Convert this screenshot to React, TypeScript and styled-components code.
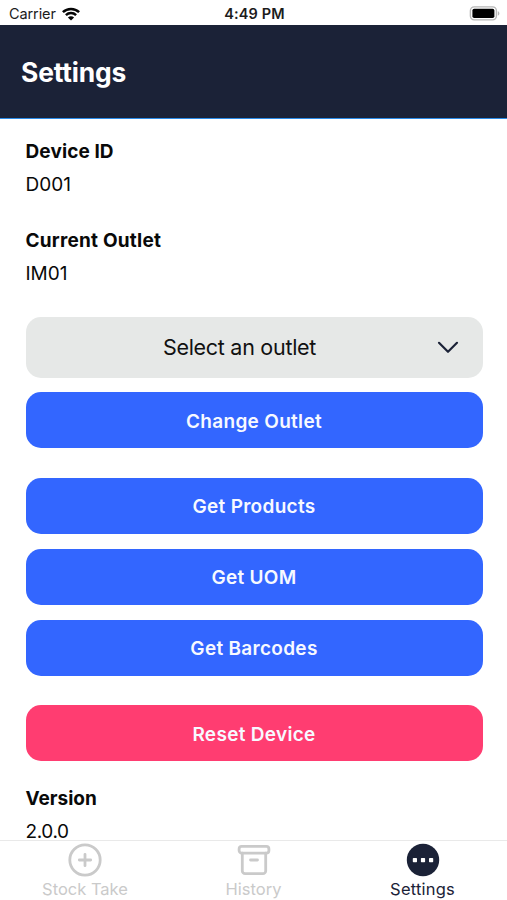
import React from 'react';
import styled, { createGlobalStyle } from 'styled-components';

const GlobalStyle = createGlobalStyle`
  * { box-sizing: border-box; }
  body { margin: 0; background: #fff; }
  button { font: inherit; border: 0; }
`;

const Screen = styled.div`
  width: 507px;
  height: 900px;
  display: flex;
  flex-direction: column;
  overflow: hidden;
  background: #fff;
  color: #090909;
  font-family: Inter, 'Liberation Sans', sans-serif;
`;

const StatusBar = styled.div`
  flex: none;
  height: 25px;
  padding: 2px 7px 0 9px;
  display: grid;
  grid-template-columns: 1fr auto 1fr;
  align-items: center;
  font-size: 14.5px;
  line-height: 20px;
  color: #1c1c1c;
`;

const Carrier = styled.div`
  display: flex;
  align-items: center;
  gap: 6px;
  letter-spacing: -0.1px;
`;

const Clock = styled.div`
  font-weight: 600;
  letter-spacing: 0.15px;
`;

const BatterySlot = styled.div`
  display: flex;
  justify-content: flex-end;
`;

const Header = styled.header`
  flex: none;
  height: 94px;
  padding: 1px 21px 0;
  display: flex;
  align-items: center;
  background: #1b2237;
  border-bottom: 1px solid #2b8be8;
`;

const Title = styled.h1`
  margin: 0;
  color: #fff;
  font-size: 26.4px;
  line-height: 32px;
  font-weight: 700;
  letter-spacing: -0.15px;
`;

const Content = styled.main`
  flex: 1;
  min-height: 0;
  padding: 19.5px 24.5px 0 25.5px;
  display: flex;
  flex-direction: column;
`;

const Field = styled.section<{ $after: number }>`
  flex: none;
  margin-bottom: ${(p) => p.$after}px;
  font-size: 19px;
`;

const Label = styled.div<{ $track?: number }>`
  height: 26px;
  line-height: 26px;
  font-weight: 700;
  letter-spacing: ${(p) => p.$track ?? 0}px;
`;

const Value = styled.div<{ $track?: number }>`
  margin-top: 7px;
  height: 26px;
  line-height: 26px;
  letter-spacing: ${(p) => p.$track ?? 0}px;
`;

const Select = styled.button`
  flex: none;
  height: 61px;
  margin-bottom: 14.5px;
  padding: 0 24px 0 17px;
  display: flex;
  align-items: center;
  border-radius: 15px;
  background: #e6e8e7;
  color: #111;

  && { font-size: 21.5px; }
`;

const SelectText = styled.span`
  flex: 1;
  text-align: center;
  letter-spacing: -0.28px;
`;

const ActionGroup = styled.div<{ $after?: number }>`
  flex: none;
  display: flex;
  flex-direction: column;
  gap: 15px;
  margin-bottom: ${(p) => p.$after ?? 29.5}px;
`;

const Action = styled.button<{ $danger?: boolean }>`
  height: 56px;
  padding: 2px 0 0;
  border-radius: 15px;
  background: ${(p) => (p.$danger ? '#ff3d71' : '#3366ff')};
  color: #f7f9ff;
  letter-spacing: 0.3px;

  && { font-size: 19px; font-weight: 600; }
`;

const TabBar = styled.nav`
  flex: none;
  height: 60px;
  border-top: 1px solid #e9e9e9;
  display: grid;
  grid-template-columns: repeat(3, 1fr);
`;

const Tab = styled.div<{ $active?: boolean; $track?: number }>`
  padding-top: 1px;
  display: flex;
  flex-direction: column;
  align-items: center;
  color: ${(p) => (p.$active ? '#1b2237' : '#cacaca')};
  font-size: 16.5px;
  line-height: 22px;
  letter-spacing: ${(p) => p.$track ?? 0}px;

  &:first-child { padding-left: 1px; }
  svg { display: block; }
`;

const WifiIcon = () => (
  <svg width="18" height="14" viewBox="0 0 18 14" fill="none" stroke="#050505" strokeWidth="2.5">
    <path d="M.9 5.1C5.3.8 12.7.8 17.1 5.1" />
    <path d="M3.9 8.2c2.9-2.8 7.3-2.8 10.2 0" />
    <path d="M9 13.6 5.9 10.5c1.7-1.7 4.5-1.7 6.2 0Z" fill="#050505" stroke="none" />
  </svg>
);

const BatteryIcon = () => (
  <svg width="31" height="15" viewBox="0 0 31 15">
    <rect x="1.4" y=".9" width="26" height="13" rx="3.8" fill="#fff" stroke="#b7b7b7" strokeWidth="1.4" />
    <rect x="3.4" y="2.8" width="22" height="9.2" rx="1.8" fill="#000" />
    <path d="M28.8 5.3c2.1.7 2.1 3.7 0 4.4Z" fill="#b7b7b7" />
  </svg>
);

const ChevronIcon = () => (
  <svg width="22" height="14" viewBox="0 0 22 14" fill="none" stroke="#1b2237" strokeWidth="2.2" strokeLinecap="round" strokeLinejoin="round">
    <path d="m2 2.8 9 9 9-9" />
  </svg>
);

const PlusCircleIcon = () => (
  <svg width="36" height="36" viewBox="0 0 36 36" fill="none" stroke="currentColor" strokeWidth="2.8" strokeLinecap="round">
    <circle cx="18" cy="18" r="15.2" />
    <path d="M18 12.3v11.4M12.3 18h11.4" />
  </svg>
);

const ArchiveIcon = () => (
  <svg width="36" height="36" viewBox="0 0 36 36" fill="none" stroke="currentColor" strokeWidth="2.8" strokeLinejoin="round" strokeLinecap="round">
    <rect x="3.1" y="4.4" width="29.8" height="6.7" rx="2.6" />
    <path d="M6.3 11.2v17.7a2.8 2.8 0 0 0 2.8 2.8h17.8a2.8 2.8 0 0 0 2.8-2.8V11.2M14.5 18h7" />
  </svg>
);

const MoreIcon = () => (
  <svg width="36" height="36" viewBox="0 0 36 36">
    <circle cx="18" cy="18" r="16.2" fill="currentColor" />
    <g fill="#fff">
      <rect x="7.8" y="16" width="4.2" height="4.2" rx=".7" />
      <rect x="15.9" y="16" width="4.2" height="4.2" rx=".7" />
      <rect x="24" y="16" width="4.2" height="4.2" rx=".7" />
    </g>
  </svg>
);

export default function App() {
  return (
    <>
      <GlobalStyle />
      <Screen>
        <StatusBar>
          <Carrier>Carrier <WifiIcon /></Carrier>
          <Clock>4:49 PM</Clock>
          <BatterySlot><BatteryIcon /></BatterySlot>
        </StatusBar>
        <Header><Title>Settings</Title></Header>
        <Content>
          <Field $after={30}>
            <Label $track={0.1}>Device ID</Label>
            <Value>D001</Value>
          </Field>
          <Field $after={30}>
            <Label $track={0.22}>Current Outlet</Label>
            <Value>IM01</Value>
          </Field>
          <Select>
            <SelectText>Select an outlet</SelectText>
            <ChevronIcon />
          </Select>
          <ActionGroup>
            <Action>Change Outlet</Action>
          </ActionGroup>
          <ActionGroup>
            <Action>Get Products</Action>
            <Action>Get UOM</Action>
            <Action>Get Barcodes</Action>
          </ActionGroup>
          <ActionGroup $after={24.5}>
            <Action $danger>Reset Device</Action>
          </ActionGroup>
          <Field $after={0}>
            <Label>Version</Label>
            <Value $track={-0.4}>2.0.0</Value>
          </Field>
        </Content>
        <TabBar>
          <Tab><PlusCircleIcon />Stock Take</Tab>
          <Tab><ArchiveIcon />History</Tab>
          <Tab $active $track={0.2}><MoreIcon />Settings</Tab>
        </TabBar>
      </Screen>
    </>
  );
}
